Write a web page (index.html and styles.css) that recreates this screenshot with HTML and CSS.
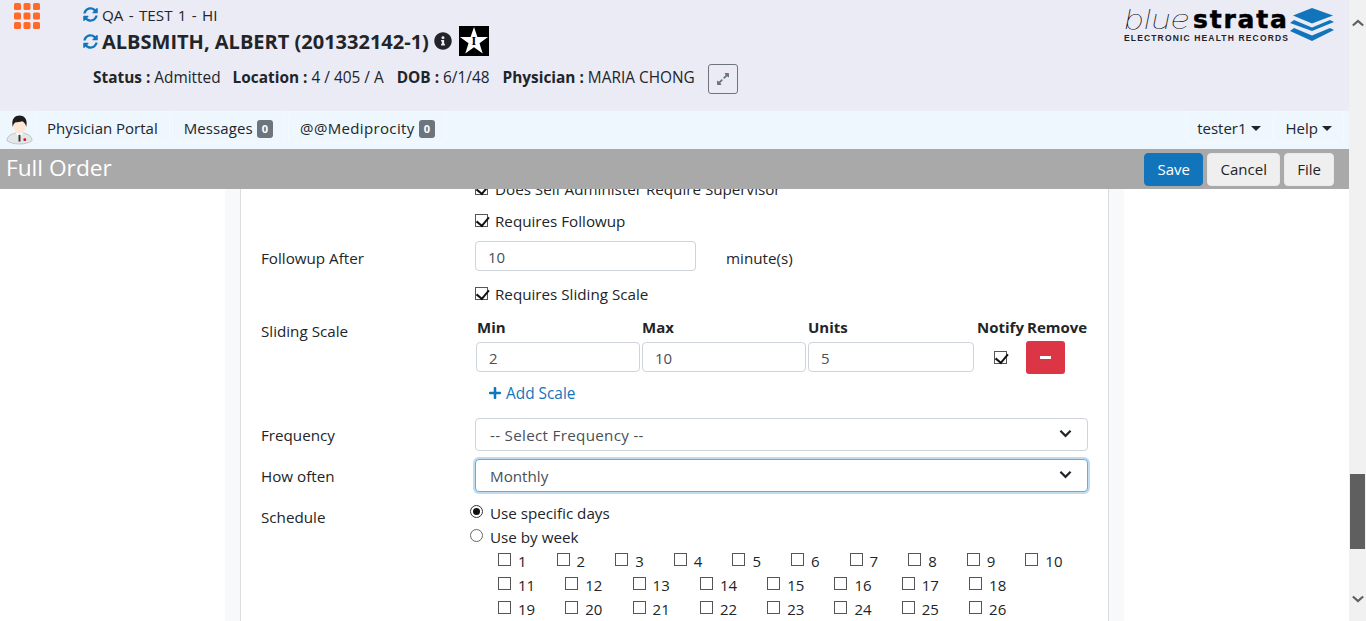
FILE: index.html
```html
<!DOCTYPE html>
<html lang="en">
<head>
<meta charset="utf-8">
<title>Full Order</title>
<link rel="stylesheet" href="styles.css">
</head>
<body>
<div class="app">
  <div class="page">
    <header class="head">
      <svg class="grid-icon" viewBox="0 0 26 26"><g fill="#ff6a2b"><rect x="0" y="0" width="7" height="7" rx="1.5"/><rect x="9.5" y="0" width="7" height="7" rx="1.5"/><rect x="19" y="0" width="7" height="7" rx="1.5"/><rect x="0" y="9.5" width="7" height="7" rx="1.5"/><rect x="9.5" y="9.5" width="7" height="7" rx="1.5"/><rect x="19" y="9.5" width="7" height="7" rx="1.5"/><rect x="0" y="19" width="7" height="7" rx="1.5"/><rect x="9.5" y="19" width="7" height="7" rx="1.5"/><rect x="19" y="19" width="7" height="7" rx="1.5"/></g></svg>
      <div class="patient">
        <div class="facility"><svg class="sync" viewBox="0 0 512 512"><path fill="#1275bb" d="M370.72 133.28C339.458 104.008 298.888 87.962 255.848 88c-77.458.068-144.328 53.178-162.791 126.85-1.344 5.363-6.122 9.15-11.651 9.15H24.103c-7.498 0-13.194-6.807-11.807-14.176C33.933 94.924 134.813 8 256 8c66.448 0 126.791 26.136 171.315 68.685L463.03 40.97C478.149 25.851 504 36.559 504 57.941V192c0 13.255-10.745 24-24 24H345.941c-21.382 0-32.09-25.851-16.971-40.971l41.75-41.749zM32 296h134.059c21.382 0 32.09 25.851 16.971 40.971l-41.75 41.75c31.262 29.273 71.835 45.319 114.876 45.28 77.418-.07 144.315-53.144 162.787-126.849 1.344-5.363 6.122-9.15 11.651-9.15h57.304c7.498 0 13.194 6.807 11.807 14.176C478.067 417.076 377.187 504 256 504c-66.448 0-126.791-26.136-171.315-68.685L48.97 471.03C33.851 486.149 8 475.441 8 454.059V320c0-13.255 10.745-24 24-24z"/></svg><span>QA - TEST 1 - HI</span></div>
        <div class="name-row"><svg class="sync sync-lg" viewBox="0 0 512 512"><path fill="#1275bb" d="M370.72 133.28C339.458 104.008 298.888 87.962 255.848 88c-77.458.068-144.328 53.178-162.791 126.85-1.344 5.363-6.122 9.15-11.651 9.15H24.103c-7.498 0-13.194-6.807-11.807-14.176C33.933 94.924 134.813 8 256 8c66.448 0 126.791 26.136 171.315 68.685L463.03 40.97C478.149 25.851 504 36.559 504 57.941V192c0 13.255-10.745 24-24 24H345.941c-21.382 0-32.09-25.851-16.971-40.971l41.75-41.749zM32 296h134.059c21.382 0 32.09 25.851 16.971 40.971l-41.75 41.75c31.262 29.273 71.835 45.319 114.876 45.28 77.418-.07 144.315-53.144 162.787-126.849 1.344-5.363 6.122-9.15 11.651-9.15h57.304c7.498 0 13.194 6.807 11.807 14.176C478.067 417.076 377.187 504 256 504c-66.448 0-126.791-26.136-171.315-68.685L48.97 471.03C33.851 486.149 8 475.441 8 454.059V320c0-13.255 10.745-24 24-24z"/></svg><span class="name">ALBSMITH, ALBERT (201332142-1)</span><svg class="info" viewBox="0 0 512 512"><path fill="#212529" d="M256 8C119.043 8 8 119.083 8 256c0 136.997 111.043 248 248 248s248-111.003 248-248C504 119.083 392.957 8 256 8zm0 110c23.196 0 42 18.804 42 42s-18.804 42-42 42-42-18.804-42-42 18.804-42 42-42zm56 254c0 6.627-5.373 12-12 12h-88c-6.627 0-12-5.373-12-12v-24c0-6.627 5.373-12 12-12h12v-64h-12c-6.627 0-12-5.373-12-12v-24c0-6.627 5.373-12 12-12h64c6.627 0 12 5.373 12 12v100h12c6.627 0 12 5.373 12 12v24z"/></svg><span class="star"><svg viewBox="0 0 30 30"><path fill="#fff" d="M15 1l3.400 10h10.600l-8.500 6.300 3.200 10.200-8.700-6.200-8.700 6.200 3.200-10.200L1 11h10.600z"/></svg><span class="star-i">I</span></span></div>
        <div class="meta">
          <span class="meta-status"><b>Status :</b> Admitted</span>
          <span><b>Location :</b> 4 / 405 / A</span>
          <span><b>DOB :</b> 6/1/48</span>
          <span><b>Physician :</b> MARIA CHONG</span>
          <button class="expand"><svg viewBox="0 0 448 512"><path fill="#6c757d" d="M212.686 315.314L120 408l32.922 31.029c15.120 15.120 4.412 40.971-16.970 40.971h-112C10.697 480 0 469.255 0 456V344c0-21.382 25.803-32.090 40.922-16.971L72 360l92.686-92.686c6.248-6.248 16.379-6.248 22.627 0l25.373 25.373c6.249 6.248 6.249 16.378 0 22.627zm22.628-118.628L328 104l-32.922-31.029C279.958 57.851 290.666 32 312.048 32h112C437.303 32 448 42.745 448 56v112c0 21.382-25.803 32.090-40.922 16.971L376 152l-92.686 92.686c-6.248 6.248-16.379 6.248-22.627 0l-25.373-25.373c-6.249-6.248-6.249-16.378 0-22.627z"/></svg></button>
        </div>
      </div>
      <div class="logo">
        <div class="logo-text">
          <div class="logo-word"><span class="thin">blue</span><span class="bold">strata</span></div>
          <div class="logo-sub">ELECTRONIC HEALTH RECORDS</div>
        </div>
        <svg class="logo-mark" viewBox="0 0 44 33"><path fill="#1275bb" d="M22 0l21 7.500L22 15.500 3 7.500z"/><path fill="#1275bb" d="M4 12l18 7.500L40 12l4 2-22 9L0 15z"/><path fill="#1275bb" d="M4 20l18 7.500L40 20l4 2-22 11L0 23z"/></svg>
      </div>
    </header>
    <nav class="nav">
      <svg class="doc" viewBox="0 0 28 30"><path fill="#e4e7e7" stroke="#b5baba" stroke-width=".8" d="M1 26c0-5 5-8 13-8s13 3 13 8c-3 2.500-8 3.500-13 3.500S4 28.500 1 26z"/><path fill="#fff" d="M10 18h8l-4 5z"/><rect x="13" y="20" width="2" height="7" fill="#333"/><circle cx="19.500" cy="25" r="1.500" fill="#d01020"/><ellipse cx="14" cy="11" rx="6.500" ry="7.500" fill="#ffe6d6"/><path fill="#1d1d1d" d="M7 12C5 3 10 0 14 0s9 3 7 12c-.5-3-2-5-4-6-3 1-5 1-7 1-1.500 1-2.500 2-3 5z"/></svg>
      <a class="nav-item">Physician Portal</a>
      <a class="nav-item nav-msg">Messages <span class="badge">0</span></a>
      <a class="nav-item nav-wide">@@Mediprocity <span class="badge">0</span></a>
      <span class="nav-space"></span>
      <a class="nav-item">tester1<i class="caret"></i></a>
      <a class="nav-item">Help<i class="caret"></i></a>
    </nav>
    <div class="titlebar">
      <h1>Full Order</h1>
      <div class="actions">
        <button class="btn btn-primary">Save</button>
        <button class="btn btn-cancel">Cancel</button>
        <button class="btn">File</button>
      </div>
    </div>
    <main class="main">
      <div class="gutter"></div>
      <div class="panel">
        <div class="form">
          <div class="row r-first"><div class="label"></div><label class="check"><i class="cb on"></i>Does Self Administer Require Supervisor</label></div>
          <div class="row r-check"><div class="label"></div><label class="check"><i class="cb on"></i>Requires Followup</label></div>
          <div class="row r-follow"><div class="label label-low">Followup After</div><div class="follow"><div class="input w-follow">10</div><span>minute(s)</span></div></div>
          <div class="row r-check2"><div class="label"></div><label class="check"><i class="cb on"></i>Requires Sliding Scale</label></div>
          <div class="row r-scale"><div class="label label-scale">Sliding Scale</div>
            <div class="scale">
              <div class="scale-head"><b class="c-min">Min</b><b class="c-max">Max</b><b class="c-units">Units</b><b class="c-notify">Notify</b><b>Remove</b></div>
              <div class="scale-row"><div class="input c-in">2</div><div class="input c-in">10</div><div class="input c-in3">5</div><span class="notify"><i class="cb on"></i></span><button class="remove"><i></i></button></div>
              <a class="add"><svg viewBox="0 0 448 512"><path fill="#1275bb" d="M416 208H272V64c0-17.670-14.330-32-32-32h-32c-17.670 0-32 14.330-32 32v144H32c-17.670 0-32 14.330-32 32v32c0 17.670 14.330 32 32 32h144v144c0 17.670 14.330 32 32 32h32c17.670 0 32-14.330 32-32V304h144c17.670 0 32-14.330 32-32v-32c0-17.670-14.330-32-32-32z"/></svg>Add Scale</a>
            </div>
          </div>
          <div class="row r-sel"><div class="label label-sel">Frequency</div><div class="select"><span class="ph">-- Select Frequency --</span><svg viewBox="0 0 14 9"><path fill="none" stroke="#212529" stroke-width="2.400" d="M1.500 1.500L7 7l5.500-5.500"/></svg></div></div>
          <div class="row r-sel2"><div class="label label-sel">How often</div><div class="select focus"><span>Monthly</span><svg viewBox="0 0 14 9"><path fill="none" stroke="#212529" stroke-width="2.400" d="M1.500 1.500L7 7l5.500-5.500"/></svg></div></div>
          <div class="row r-sched"><div class="label label-sched">Schedule</div>
            <div class="sched">
              <label class="radio"><i class="rd on"></i>Use specific days</label>
              <label class="radio"><i class="rd"></i>Use by week</label>
              <div class="days d10"><label><i class="cb"></i>1</label><label><i class="cb"></i>2</label><label><i class="cb"></i>3</label><label><i class="cb"></i>4</label><label><i class="cb"></i>5</label><label><i class="cb"></i>6</label><label><i class="cb"></i>7</label><label><i class="cb"></i>8</label><label><i class="cb"></i>9</label><label><i class="cb"></i>10</label></div>
              <div class="days d8"><label><i class="cb"></i>11</label><label><i class="cb"></i>12</label><label><i class="cb"></i>13</label><label><i class="cb"></i>14</label><label><i class="cb"></i>15</label><label><i class="cb"></i>16</label><label><i class="cb"></i>17</label><label><i class="cb"></i>18</label></div>
              <div class="days d8"><label><i class="cb"></i>19</label><label><i class="cb"></i>20</label><label><i class="cb"></i>21</label><label><i class="cb"></i>22</label><label><i class="cb"></i>23</label><label><i class="cb"></i>24</label><label><i class="cb"></i>25</label><label><i class="cb"></i>26</label></div>
            </div>
          </div>
        </div>
      </div>
      <div class="gutter"></div>
    </main>
  </div>
  <aside class="scrollbar">
    <svg class="arrow a-up" viewBox="0 0 14 9"><path fill="none" stroke="#5f5f5f" stroke-width="2.500" d="M1 7.500L7 2l6 5.500"/></svg>
    <div class="thumb"></div>
    <svg class="arrow a-down" viewBox="0 0 14 9"><path fill="none" stroke="#5f5f5f" stroke-width="2.500" d="M1 1.500L7 7l6-5.500"/></svg>
  </aside>
</div>
</body>
</html>
```
FILE: styles.css
```css
* { box-sizing: border-box; }
html, body { margin: 0; padding: 0; height: 100%; overflow: hidden; }
body { font-family: "Open Sans", "Noto Sans", sans-serif; font-size: 15.200px; color: #212529; background: #fff; }
.app { display: flex; height: 621px; }
.page { width: 1349px; display: flex; flex-direction: column; }
.head { height: 111px; background: #ebebf5; display: flex; flex: none; }
.grid-icon { width: 26px; height: 26px; margin: 3px 0 0 14px; flex: none; }
.patient { margin-left: 43px; width: 1000px; padding-top: 4px; }
.facility { display: flex; align-items: center; height: 21px; font-size: 15.200px; word-spacing: 1.400px; }
.sync { width: 15px; height: 15px; margin-right: 4px; flex: none; }
.name-row { display: flex; align-items: center; height: 30px; margin-top: 1px; }
.sync-lg { margin-right: 4px; }
.name { font-size: 20px; font-weight: 700; color: #212529; margin-right: 5px; }
.info { width: 18px; height: 18px; margin: -1px 7px 0 0; flex: none; }
.star { width: 30px; height: 30px; background: #000; position: relative; display: block; }
.star svg { width: 30px; height: 30px; display: block; }
.star-i { position: absolute; left: 0; right: 0; top: 8px; text-align: center; font: 700 12px/14px "Liberation Serif", serif; color: #000; }
.meta { display: flex; align-items: flex-start; margin: 8px 0 0 10px; gap: 13px; height: 30px; line-height: 28px; font-size: 15.400px; }
.meta b { font-weight: 700; }
.meta-status { margin-right: -1px; }
.expand { width: 30px; height: 30px; border: 1px solid #6c757d; border-radius: 3px; background: transparent; padding: 0; display: flex; align-items: center; justify-content: center; }
.expand svg { width: 12px; height: 14px; }
.logo { position: absolute; left: 1124px; top: 8px; display: flex; }
.logo-text { width: 166px; }
.logo-word { height: 24px; line-height: 24px; white-space: nowrap; color: #000; display: flex; }
.thin { display: inline-block; font-family: "Inter", sans-serif; font-style: italic; font-weight: 100; font-size: 27px; width: 69px; transform: scaleX(1.250); transform-origin: left center; }
.bold { font-family: "DejaVu Sans", sans-serif; font-weight: 700; font-size: 25px; letter-spacing: 1.800px; -webkit-text-stroke: .5px #000; }
.logo-sub { font: 700 8.500px/10px "Liberation Sans", sans-serif; letter-spacing: 1.150px; white-space: nowrap; margin-top: 1px; }
.logo-mark { width: 44px; height: 33px; flex: none; }
.nav { height: 38px; background: #eef6fe; display: flex; align-items: flex-start; flex: none; padding-right: 5px; gap: 1px; font-size: 15px; }
.doc { width: 27px; height: 30px; margin: 4px 1px 0 6px; flex: none; }
.nav-item { height: 32px; line-height: 34px; padding: 0 12px; border-radius: 4px; color: #212529; white-space: nowrap; box-shadow: inset 0 0 0 1px #f4f9ff; }
.nav-msg { margin-left: 1px; letter-spacing: .1px; }
.nav-wide { letter-spacing: .35px; margin-left: 2px; }
.nav-space { flex: 1; }
.badge { display: inline-block; background: #6c757d; color: #fff; font-size: 11px; font-weight: 700; border-radius: 3px; padding: 0 5px; line-height: 18px; vertical-align: 1px; letter-spacing: 0; }
.caret { display: inline-block; border-left: 5px solid transparent; border-right: 5px solid transparent; border-top: 5px solid #212529; margin-left: 4px; vertical-align: 3px; }
.titlebar { height: 40px; background: #a9a9a9; display: flex; justify-content: space-between; align-items: center; flex: none; padding: 0 15px 0 6px; }
h1 { margin: -3px 0 0; font-size: 22.700px; font-weight: 400; color: #fff; }
.actions { display: flex; gap: 4px; }
.btn { height: 33px; border: 1px solid #eaeaea; border-radius: 4px; background: #efefef; color: #212529; font: 15px "Open Sans", sans-serif; padding: 0 12px; }
.btn-primary { background: #1275bb; border-color: #1275bb; color: #fff; width: 59px; }
.btn-cancel { width: 73px; }
.main { flex: 1; min-height: 0; overflow: hidden; display: flex; justify-content: center; }
.gutter { width: 15px; background: #f8f9fb; flex: none; }
.panel { width: 869px; flex: none; border-left: 1px solid #dcdcdc; border-right: 1px solid #dcdcdc; padding: 0 20px; overflow: hidden; }
.form { margin-top: -11px; }
.row { display: flex; }
.label { width: 214px; flex: none; line-height: 21px; }
.label-low { padding-top: 5px; height: 26px; }
.label-sel { padding-top: 2px; height: 23px; }
.check { display: flex; align-items: center; height: 21px; }
.cb { width: 13px; height: 13px; border: 1px solid #555; background: #fff; display: block; position: relative; flex: none; margin-right: 7px; }
.cb.on::after { content: ""; position: absolute; left: 3px; top: -1px; width: 5.500px; height: 9.500px; border: solid #111; border-width: 0 2.500px 2.500px 0; transform: rotate(40deg); }
.r-first { height: 21px; }
.r-check { margin-top: 11px; height: 21px; }
.r-follow { margin-top: 10px; height: 30px; align-items: center; }
.follow { display: flex; align-items: center; }
.follow span { margin: 4px 0 0 30px; }
.input { height: 30px; line-height: 30px; border: 1px solid #ced4da; border-radius: 4px; padding: 0 12px; color: #495057; background: #fff; font-size: 15px; }
.w-follow { width: 221px; }
.r-check2 { margin-top: 12px; height: 21px; }
.r-scale { margin-top: 11px; }
.label-scale { padding-top: 6px; height: 27px; }
.scale { width: 613px; }
.scale-head { display: flex; height: 24px; align-items: center; padding-left: 2px; font-size: 15px; }
.scale-head b { font-weight: 700; }
.c-min { width: 165px; }
.c-max { width: 166px; }
.c-units { width: 169px; }
.c-notify { width: 50px; }
.scale-row { display: flex; align-items: flex-start; padding-left: 1px; gap: 2px; margin-top: 2px; height: 33px; }
.c-in { width: 164px; margin-top: 1px; }
.c-in3 { width: 166px; margin-top: 1px; }
.notify { width: 50px; margin-right: -2px; padding: 10px 0 0 18px; display: block; }
.remove { width: 39px; height: 33px; background: #dc3545; border: 0; border-radius: 3px; display: flex; align-items: center; justify-content: center; padding: 0; }
.remove i { width: 11px; height: 3px; background: #fff; }
.add { display: flex; align-items: center; height: 22px; margin: 8px 0 0 14px; color: #1275bb; font-size: 15.400px; }
.add svg { width: 12px; height: 14px; margin-right: 5px; }
.r-sel { margin-top: 14px; align-items: center; }
.r-sel2 { margin-top: 8px; align-items: center; }
.select { width: 613px; height: 33px; border: 1px solid #ced4da; border-radius: 4px; display: flex; justify-content: space-between; align-items: center; padding: 0 15px 0 14px; color: #495057; background: #fff; }
.ph { letter-spacing: .3px; }
.select svg { width: 13px; height: 9px; margin-top: -3px; }
.focus { border-color: #63ade0; box-shadow: 0 0 0 2px #c1dcee; }
.r-sched { margin-top: 9px; }
.label-sched { padding-top: 6px; height: 27px; }
.sched { margin-left: -5px; }
.radio { display: flex; align-items: center; height: 24px; }
.rd { width: 13px; height: 13px; border: 1px solid #666; border-radius: 50%; background: #fff; margin-right: 7px; position: relative; margin-top: -4px; flex: none; }
.rd.on { border-color: #333; }
.rd.on::after { content: ""; position: absolute; left: 2px; top: 2px; width: 7px; height: 7px; border-radius: 50%; background: #111; }
.days { display: flex; padding-left: 28px; height: 24px; align-items: center; font-size: 15px; }
.days label { display: flex; align-items: center; flex: none; }
.days .cb { margin-top: -4px; }
.d10 label { width: 58.600px; }
.d8 label { width: 67.300px; }
.scrollbar { width: 17px; background: #f1f1f1; display: flex; flex-direction: column; align-items: center; flex: none; }
.arrow { width: 12px; height: 8px; flex: none; }
.a-up { margin-top: 19px; }
.thumb { width: 15px; height: 75px; background: #5f5f5f; margin-top: 447px; }
.a-down { margin-top: 46px; }
```
